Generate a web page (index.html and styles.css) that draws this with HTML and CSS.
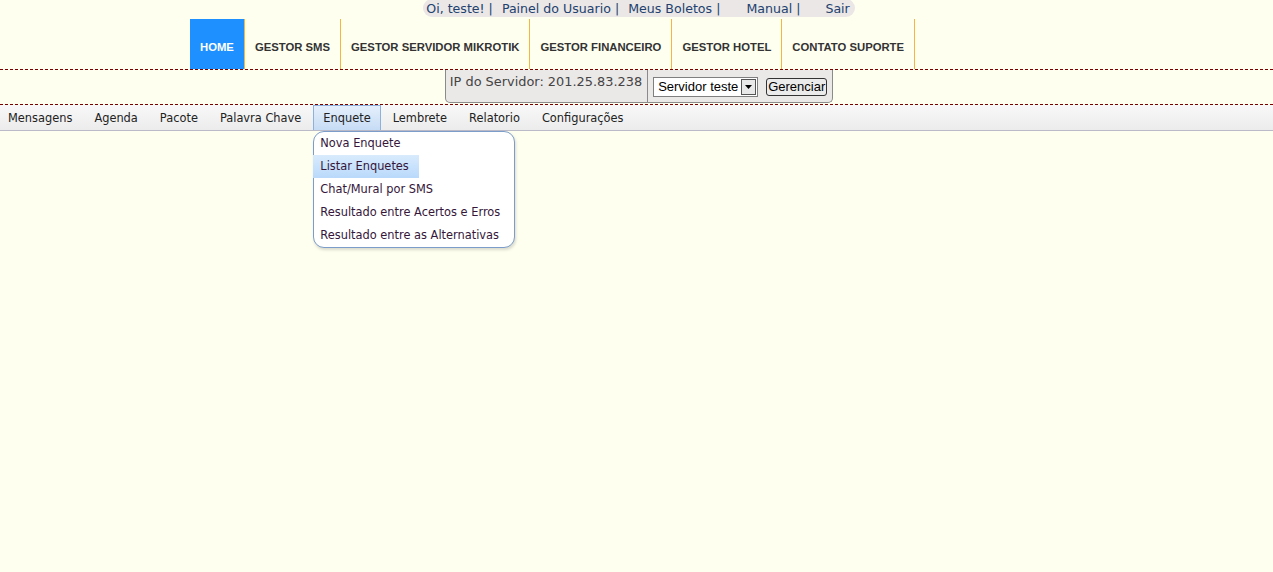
FILE: index.html
```html
<!DOCTYPE html>
<html lang="pt">
<head>
<meta charset="utf-8">
<title>Gestor</title>
<link rel="stylesheet" href="styles.css">
</head>
<body>
<div class="topbar">
  <div class="pill">
    <a class="tlink">Oi, teste! |</a>
    <a class="tlink">Painel do Usuario |</a>
    <a class="tlink">Meus Boletos |</a>
    <a class="tlink manual">Manual |</a>
    <a class="tlink sair">Sair</a>
  </div>
</div>
<nav class="mainnav">
  <a class="nitem active">HOME</a>
  <a class="nitem">GESTOR SMS</a>
  <a class="nitem">GESTOR SERVIDOR MIKROTIK</a>
  <a class="nitem">GESTOR FINANCEIRO</a>
  <a class="nitem">GESTOR HOTEL</a>
  <a class="nitem">CONTATO SUPORTE</a>
</nav>
<div class="serverband">
  <div class="serverbox">
    <div class="ipcell">IP do Servidor: 201.25.83.238</div>
    <div class="ctrlcell">
      <div class="fakeselect"><span class="seltext">Servidor teste</span><span class="selarrow"><svg width="7" height="4" viewBox="0 0 7 4"><path d="M0 0h7L3.5 4z" fill="#000"/></svg></span></div>
      <button class="btn">Gerenciar</button>
    </div>
  </div>
</div>
<div class="menubar">
  <a class="mitem first">Mensagens</a>
  <a class="mitem">Agenda</a>
  <a class="mitem">Pacote</a>
  <a class="mitem">Palavra Chave</a>
  <div class="mwrap">
    <a class="mitem active">Enquete</a>
    <div class="dropdown">
      <a class="ditem">Nova Enquete</a>
      <a class="ditem hover">Listar Enquetes</a>
      <a class="ditem">Chat/Mural por SMS</a>
      <a class="ditem">Resultado entre Acertos e Erros</a>
      <a class="ditem">Resultado entre as Alternativas</a>
    </div>
  </div>
  <a class="mitem">Lembrete</a>
  <a class="mitem">Relatorio</a>
  <a class="mitem">Configurações</a>
</div>
</body>
</html>
```
FILE: styles.css
```css
html, body {
  margin: 0;
  padding: 0;
  background: #fffff0;
  height: 100%;
}
body {
  font-family: "DejaVu Sans", Verdana, sans-serif;
}
a { text-decoration: none; cursor: pointer; }

.topbar {
  display: flex;
  justify-content: center;
  height: 19px;
  padding-left: 5px;
}
.pill {
  display: flex;
  align-items: center;
  height: 18px;
  background: #eae7e6;
  border-radius: 9px;
  padding: 0 5px 0 3px;
  font-size: 12.6px;
  color: #23416e;
  margin-top: -1px;
}
.tlink { color: #23416e; margin-right: 9px; white-space: nowrap; }
.tlink.manual { margin-left: 17px; margin-right: 25px; }
.tlink.sair { margin-right: 0; }

.mainnav {
  display: flex;
  padding-left: 190px;
  height: 50px;
}
.nitem {
  display: flex;
  align-items: center;
  padding: 5px 10px 0 10px;
  font-family: "Liberation Sans", Arial, sans-serif;
  font-weight: bold;
  font-size: 11.3px;
  color: #333;
  border-right: 1px solid #f5b540;
  white-space: nowrap;
}
.nitem.active {
  background: #1e90ff;
  color: #fff;
}

.serverband {
  border-top: 1px dashed #7a0000;
  border-bottom: 1px dashed #7a0000;
  display: flex;
  justify-content: center;
  height: 34px;
}
.serverbox {
  display: flex;
  margin-left: 5px;
  height: 32px;
  background: #ebe8e8;
  border: 1px solid #8b8b8b;
  border-top: none;
  border-radius: 0 0 5px 5px;
}
.ipcell {
  padding: 4px 5px 0 4px;
  font-size: 12.9px;
  color: #444;
  border-right: 1px solid #8b8b8b;
}
.ctrlcell {
  display: flex;
  align-items: center;
  padding: 1px 5px 0 5px;
  gap: 8px;
}
.fakeselect {
  display: flex;
  align-items: stretch;
  height: 18px;
  width: 103px;
  background: #fff;
  border: 1px solid #7f7f7f;
  font-family: "Liberation Sans", Arial, sans-serif;
  font-size: 13px;
  color: #000;
  white-space: nowrap;
}
.seltext { flex: 1; padding: 0 0 0 4px; line-height: 18px; overflow: hidden; }
.selarrow {
  width: 15px;
  margin: 1px;
  background: #e8e8e8;
  border: 1px solid #555;
  box-sizing: border-box;
  display: flex;
  align-items: center;
  justify-content: center;
}
.btn {
  height: 18px;
  padding: 0 1px;
  font-family: "Liberation Sans", Arial, sans-serif;
  font-size: 13px;
  color: #000;
  background: #ebebeb;
  border: 1px solid #333;
  border-radius: 3px;
  line-height: 14px;
}

.menubar {
  display: flex;
  align-items: stretch;
  height: 25px;
  background: linear-gradient(#f8f8f8, #ececec);
  border-bottom: 1px solid #babac8;
  font-size: 11.4px;
  margin-left: -2px;
}
.mitem {
  display: flex;
  align-items: center;
  padding: 0 9px;
  margin-right: 2px;
  color: #222;
  white-space: nowrap;
  border: 1px solid transparent;
  border-bottom: none;
}
.mwrap {
  position: relative;
  display: flex;
  margin-right: 2px;
}
.mwrap .mitem { margin-right: 0; }
.mitem.active {
  background: linear-gradient(#e5effb, #c6dcf5);
  border: 1px solid #8db1df;
  border-bottom: none;
}
.dropdown {
  position: absolute;
  left: 0;
  top: 26px;
  width: 200px;
  padding: 0;
  background: #fff;
  border: 1px solid #7c9dc9;
  border-radius: 11px;
  box-shadow: 1px 2px 3px rgba(0,0,0,0.15);
  display: flex;
  flex-direction: column;
  align-items: flex-start;
}
.ditem {
  display: block;
  height: 23px;
  line-height: 23px;
  padding: 0 6px;
  color: #35163a;
  font-size: 11.4px;
  white-space: nowrap;
}
.ditem.hover {
  width: 93px;
  margin-left: -1px;
  padding-left: 7px;
  background: linear-gradient(#d9ebfd, #b9d9fb);
}
```
